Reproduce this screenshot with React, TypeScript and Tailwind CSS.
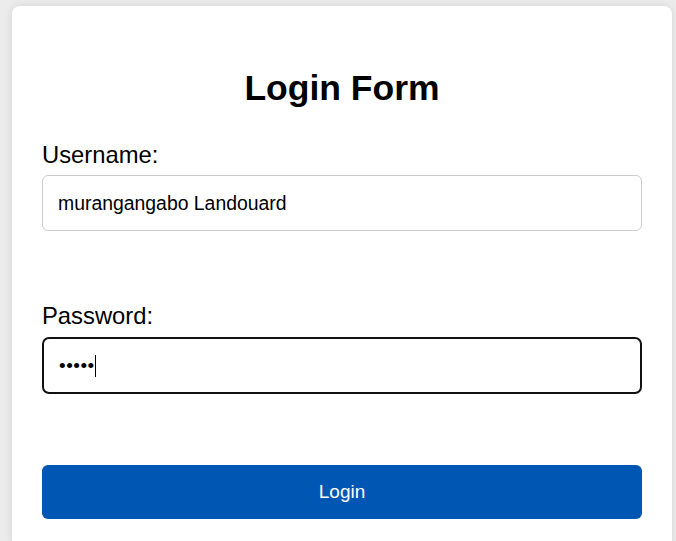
import React from 'react'

const App = () => {
    return (
        <div className="min-h-[541px] bg-[#ececec] pt-[6px] pl-[12px] font-['Liberation_Sans',Arial,sans-serif] text-black">
            <div className="w-[660px] bg-white rounded-lg shadow-[0_0_10px_rgba(0,0,0,0.1)] px-[30px] pt-[58px] pb-[30px]">
                {/* Title */}
                <h1 className="text-[35.5px] leading-[48px] font-bold text-center">Login Form</h1>

                {/* Username */}
                <label className="block mt-[31px] mb-[8px] text-[23.8px] leading-[24px]">Username:</label>
                <input
                    type="text"
                    defaultValue="murangangabo Landouard"
                    className="block w-full h-[56px] px-[15px] border border-[#cccccc] rounded-md text-[19.4px] outline-none"
                />

                {/* Password */}
                <label className="block mt-[73px] mb-[9px] text-[23.8px] leading-[24px]">Password:</label>
                <div className="flex items-center w-full h-[57px] px-[15px] border-[2.5px] border-[#111111] rounded-[7px]">
                    <span className="text-[19px] tracking-[0.5px] leading-none">•••••</span>
                    <span className="w-[1.5px] h-[22px] bg-black"></span>
                </div>

                {/* Button */}
                <button className="mt-[71px] w-full h-[54px] bg-[#0056b3] text-white text-[19px] rounded-md">
                    Login
                </button>
            </div>
        </div>
    )
}

export default App
